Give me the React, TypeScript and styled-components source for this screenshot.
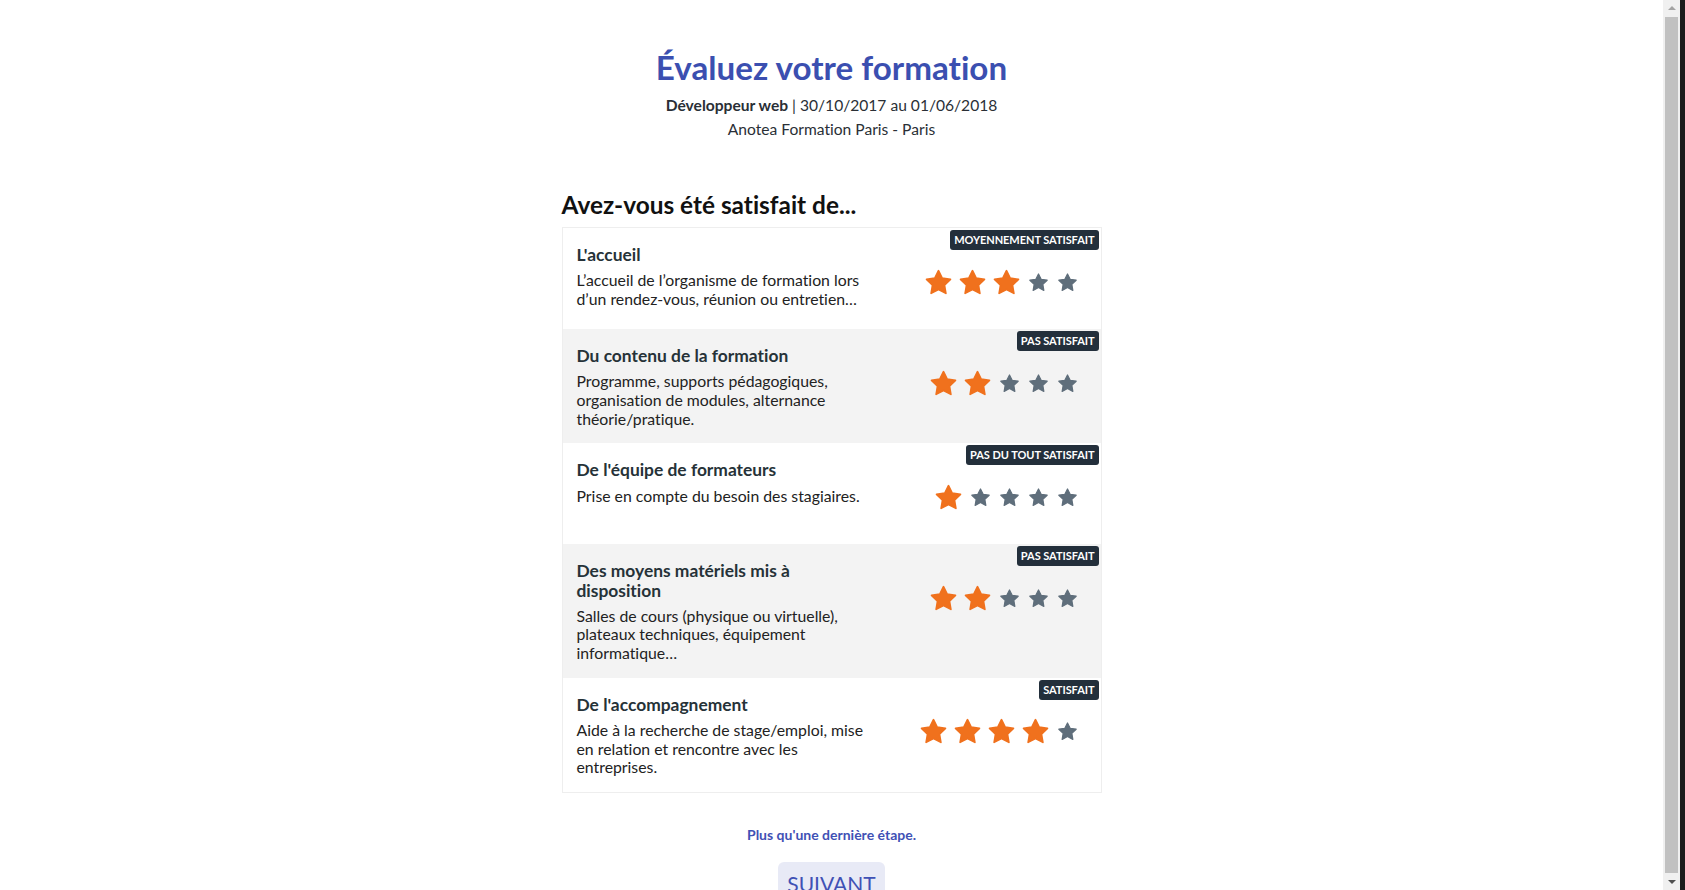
import React from "react";
import styled, { createGlobalStyle } from "styled-components";

const GlobalStyle = createGlobalStyle`
  html, body {
    margin: 0;
    padding: 0;
    background: #ffffff;
  }
  body {
    font-family: Lato, "Liberation Sans", sans-serif;
    font-variant-ligatures: no-common-ligatures;
    color: #222;
  }
  * { box-sizing: border-box; }
`;

const Shell = styled.div`
  display: flex;
  align-items: flex-start;
`;

const Page = styled.main`
  flex: 1;
  display: flex;
  flex-direction: column;
  align-items: center;
  padding: 46px 0 40px;
`;

/* window chrome: vertical scrollbar + screen edge */
const Rail = styled.aside`
  position: sticky;
  top: 0;
  flex: 0 0 22px;
  height: 100vh;
  display: flex;
`;

const Track = styled.div`
  width: 17px;
  height: 100%;
  background: #f0f0f0;
  display: flex;
  flex-direction: column;
  align-items: center;
  padding: 6px 2px 6px;
  gap: 4px;
`;

const Arrow = styled.span<{ $down?: boolean }>`
  width: 0;
  height: 0;
  border-left: 4px solid transparent;
  border-right: 4px solid transparent;
  ${(p) =>
    p.$down
      ? "border-top: 4px solid #505050;"
      : "border-bottom: 4px solid #a3a3a3;"}
`;

const Thumb = styled.div`
  flex: 1;
  width: 13px;
  margin: 3px 0;
  background: #c1c1c1;
`;

const Edge = styled.div`
  width: 5px;
  height: 100%;
  background: #1b1b1b;
`;

const Title = styled.h1`
  margin: 0;
  font-size: 33.2px;
  line-height: 42px;
  font-weight: 700;
  color: #3b4fb0;
`;

const Meta = styled.p`
  margin: 5px 0 0;
  font-size: 15.6px;
  line-height: 24px;
  color: #2a2f36;
  text-align: center;
`;

const Strong = styled.strong`
  font-weight: 700;
`;

const Section = styled.section`
  width: 540px;
  margin-top: 49px;
`;

const Heading = styled.h2`
  margin: 0 0 7px;
  font-size: 24.4px;
  line-height: 30px;
  font-weight: 700;
  color: #111;
`;

const Card = styled.div`
  border: 1px solid #eeeeee;
  display: flex;
  flex-direction: column;
`;

const Row = styled.div<{ $shaded: boolean }>`
  position: relative;
  display: flex;
  justify-content: space-between;
  align-items: flex-start;
  min-height: 101px;
  padding: 17px 19px 15px 14px;
  background: ${(p) => (p.$shaded ? "#f3f3f3" : "#ffffff")};
`;

const TextCol = styled.div`
  flex: 0 0 290px;
  display: flex;
  flex-direction: column;
  gap: 7px;
`;

const RowTitle = styled.h3`
  margin: 0;
  font-size: 17.4px;
  line-height: 19.2px;
  font-weight: 700;
  color: #263238;
`;

const RowDesc = styled.p`
  margin: 0;
  font-size: 15.8px;
  line-height: 18.7px;
  color: #222;
`;

const Badge = styled.span`
  position: absolute;
  top: 2px;
  right: 2px;
  height: 20px;
  padding: 0 4px;
  border-radius: 3px;
  background: #232f3b;
  color: #ffffff;
  font-size: 11px;
  line-height: 20px;
  font-weight: 700;
  letter-spacing: -0.05px;
  text-transform: uppercase;
  white-space: nowrap;
`;

const Stars = styled.div`
  display: flex;
  align-items: center;
  margin-top: 24px;
`;

const StarBox = styled.span<{ $on: boolean }>`
  display: flex;
  align-items: center;
  justify-content: center;
  width: ${(p) => (p.$on ? 34 : 29)}px;
  height: 26px;
  color: ${(p) => (p.$on ? "#f0711d" : "#5f6e7b")};
  svg {
    width: ${(p) => (p.$on ? 29 : 21)}px;
    height: ${(p) => (p.$on ? 29 : 21)}px;
  }
`;

const Footer = styled.div`
  display: flex;
  flex-direction: column;
  align-items: center;
  margin-top: 33px;
`;

const Hint = styled.p`
  margin: 0;
  font-size: 14px;
  line-height: 18px;
  font-weight: 700;
  color: #3f51b5;
`;

const NextButton = styled.button`
  margin-top: 18px;
  padding: 8px 9px;
  border: none;
  border-radius: 6px;
  background: #e8eaf6;
  color: #3f51b5;
  font-family: Lato, "Liberation Sans", sans-serif;
  font-size: 21px;
  line-height: 28px;
  cursor: pointer;
`;

const Star = () => (
  <svg viewBox="0 0 24 24" aria-hidden="true">
    <polygon
      points="12,2.2 15.05,8.4 21.9,9.4 16.95,14.2 18.1,21 12,17.8 5.9,21 7.05,14.2 2.1,9.4 8.95,8.4"
      fill="currentColor"
      stroke="currentColor"
      strokeWidth="1.4"
      strokeLinejoin="round"
    />
  </svg>
);

type Item = { title: string; desc: string; label: string; score: number };

const items: Item[] = [
  {
    title: "L'accueil",
    desc: "L’accueil de l’organisme de formation lors d’un rendez-vous, réunion ou entretien…",
    label: "Moyennement satisfait",
    score: 3,
  },
  {
    title: "Du contenu de la formation",
    desc: "Programme, supports pédagogiques, organisation de modules, alternance théorie/pratique.",
    label: "Pas satisfait",
    score: 2,
  },
  {
    title: "De l'équipe de formateurs",
    desc: "Prise en compte du besoin des stagiaires.",
    label: "Pas du tout satisfait",
    score: 1,
  },
  {
    title: "Des moyens matériels mis à disposition",
    desc: "Salles de cours (physique ou virtuelle), plateaux techniques, équipement informatique…",
    label: "Pas satisfait",
    score: 2,
  },
  {
    title: "De l'accompagnement",
    desc: "Aide à la recherche de stage/emploi, mise en relation et rencontre avec les entreprises.",
    label: "Satisfait",
    score: 4,
  },
];

export default function App() {
  return (
    <>
      <GlobalStyle />
      <Shell>
        <Page>
          <Title>Évaluez votre formation</Title>
          <Meta>
            <Strong>Développeur web</Strong> | 30/10/2017 au 01/06/2018
            <br />
            Anotea Formation Paris - Paris
          </Meta>
          <Section>
            <Heading>Avez-vous été satisfait de...</Heading>
            <Card>
              {items.map((it, i) => (
                <Row key={it.title} $shaded={i % 2 === 1}>
                  <Badge>{it.label}</Badge>
                  <TextCol>
                    <RowTitle>{it.title}</RowTitle>
                    <RowDesc>{it.desc}</RowDesc>
                  </TextCol>
                  <Stars>
                    {[1, 2, 3, 4, 5].map((n) => (
                      <StarBox key={n} $on={n <= it.score}>
                        <Star />
                      </StarBox>
                    ))}
                  </Stars>
                </Row>
              ))}
            </Card>
          </Section>
          <Footer>
            <Hint>Plus qu'une dernière étape.</Hint>
            <NextButton>SUIVANT</NextButton>
          </Footer>
        </Page>
        <Rail aria-hidden="true">
          <Track>
            <Arrow />
            <Thumb />
            <Arrow $down />
          </Track>
          <Edge />
        </Rail>
      </Shell>
    </>
  );
}
